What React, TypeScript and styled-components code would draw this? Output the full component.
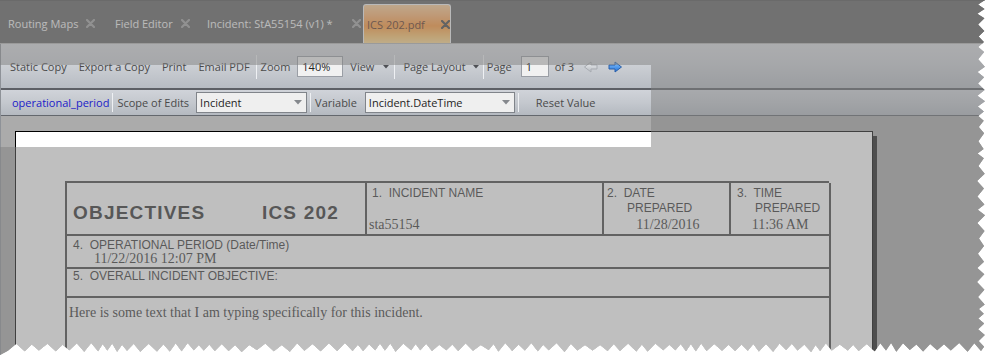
import React from 'react';
import styled, { createGlobalStyle } from 'styled-components';

const Global = createGlobalStyle`
  html, body { margin: 0; padding: 0; background: #ffffff; }
  body { font-family: "Open Sans", "Noto Sans", sans-serif; }
  #root { width: 985px; height: 355px; }
`;

const W = 985;
const H = 355;

function tornClip(): string {
  let seed = 11;
  const rnd = () => {
    seed = (seed * 16807) % 2147483647;
    return (seed - 1) / 2147483646;
  };
  const pts: string[] = ['0px 0px', `${W}px 0px`];
  let y = 0;
  while (y < H - 14) {
    const step = 9 + rnd() * 7;
    pts.push(`${(W - 6 - rnd() * 2).toFixed(1)}px ${(y + step / 2).toFixed(1)}px`);
    y += step;
    pts.push(`${(W - rnd() * 1.5).toFixed(1)}px ${y.toFixed(1)}px`);
  }
  let x = W - 4;
  pts.push(`${x}px ${H - 4}px`);
  while (x > 14) {
    const step = 9 + rnd() * 8;
    pts.push(`${(x - step / 2).toFixed(1)}px ${(H - 10 - rnd() * 2).toFixed(1)}px`);
    x -= step;
    pts.push(`${x.toFixed(1)}px ${(H - 3 - rnd() * 2).toFixed(1)}px`);
  }
  pts.push(`0px ${H}px`);
  return `polygon(${pts.join(', ')})`;
}

const Frame = styled.div<{ $clip: string }>`
  position: relative;
  width: ${W}px;
  height: ${H}px;
  overflow: hidden;
  clip-path: ${(p) => p.$clip};
  display: flex;
  flex-direction: column;
  background: #ababab;
`;

/* ---------- tab bar ---------- */
const TabBar = styled.div`
  height: 42px;
  flex: none;
  background: #626262;
  border-top: 1px solid #545454;
  border-bottom: 1px solid #b4b4b4;
  display: flex;
  align-items: flex-end;
`;

const Tab = styled.div<{ $w: number; $pl: number; $active?: boolean }>`
  box-sizing: border-box;
  width: ${(p) => p.$w}px;
  height: 39px;
  padding-left: ${(p) => p.$pl}px;
  display: flex;
  align-items: center;
  gap: 8px;
  font-size: 11px;
  color: ${(p) => (p.$active ? '#5a3020' : '#f4f4f4')};
  white-space: nowrap;
  ${(p) =>
    p.$active &&
    `
    border: 1px solid #f2f2f2;
    border-bottom: none;
    border-radius: 3px 3px 0 0;
    background: linear-gradient(#ffcf98 0%, #ffb068 30%, #ff9838 55%, #ffc870 85%, #ffd890 100%);
  `}
`;

const TabGap = styled.span<{ $w: number }>`
  flex: none;
  width: ${(p) => p.$w}px;
`;

const CloseX = ({ color }: { color: string }) => (
  <svg width="9" height="9" viewBox="0 0 9 9" style={{ flex: 'none' }}>
    <path d="M1 1 L8 8 M8 1 L1 8" stroke={color} strokeWidth="2.2" strokeLinecap="round" />
  </svg>
);

/* ---------- toolbars ---------- */
const Body = styled.div`
  flex: 1;
  display: flex;
  flex-direction: column;
  border-left: 1px solid #8e9298;
`;

const Toolbar = styled.div`
  height: 46px;
  flex: none;
  box-sizing: border-box;
  background: linear-gradient(#d8dade 0%, #cdd0d5 45%, #b7bcc3 100%);
  border-bottom: 2px solid #5d6066;
  display: flex;
  align-items: center;
  padding: 1px 0 0 3px;
  font-size: 11px;
  color: #4a4a4a;
`;

const Toolbar2 = styled(Toolbar)`
  height: 26px;
  border-bottom: 1px solid #63676d;
  background: linear-gradient(#d0d3d9 0%, #c4c8ce 50%, #b4b9c0 100%);
  padding: 0 0 0 5px;
`;

const ToolButton = styled.div<{ $pl?: number; $pr?: number; $gap?: number }>`
  display: flex;
  align-items: center;
  gap: ${(p) => p.$gap ?? 9}px;
  height: 22px;
  padding: 0 ${(p) => p.$pr ?? 6}px 0 ${(p) => p.$pl ?? 6}px;
  white-space: nowrap;
`;

const Sep = styled.div<{ $h?: number }>`
  width: 1px;
  height: ${(p) => p.$h ?? 24}px;
  background: #eef0f3;
  flex: none;
`;

const Field = styled.div<{ $w: number }>`
  box-sizing: border-box;
  width: ${(p) => p.$w}px;
  height: 21px;
  margin: 0 3px;
  border: 1px solid #9a9ea5;
  background: #f1f1f1;
  color: #222;
  display: flex;
  align-items: center;
  padding-left: 4px;
  font-size: 11px;
  flex: none;
`;

const Select = styled.div<{ $w: number }>`
  box-sizing: border-box;
  width: ${(p) => p.$w}px;
  height: 21px;
  margin: 0 3px;
  border: 1px solid #80848a;
  background: #efefef;
  color: #1e1e1e;
  display: flex;
  align-items: center;
  justify-content: space-between;
  padding: 0 4px 0 3px;
  font-size: 11px;
  flex: none;
`;

const LinkText = styled.span`
  color: #2020c8;
  padding: 0 3px 0 6px;
`;

const Caret = () => (
  <svg width="6" height="4" viewBox="0 0 6 4">
    <path d="M0 0 H6 L3 3.5 Z" fill="#4f5156" />
  </svg>
);

const SelectArrow = () => (
  <svg width="8" height="5" viewBox="0 0 8 5">
    <path d="M0 0 H8 L4 4.5 Z" fill="#85888d" />
  </svg>
);

const NavArrow = ({ dir, on }: { dir: 'left' | 'right'; on: boolean }) => (
  <svg width="15" height="12" viewBox="0 0 15 12" style={{ flex: 'none', transform: dir === 'left' ? 'scaleX(-1)' : undefined }}>
    <defs>
      <linearGradient id={`ag-${dir}`} x1="0" y1="0" x2="0" y2="1">
        <stop offset="0" stopColor={on ? '#8cc8ff' : '#eceef0'} />
        <stop offset="1" stopColor={on ? '#1f6fd8' : '#b8bcc2'} />
      </linearGradient>
    </defs>
    <path
      d="M1 4 H7 V1 L13.5 6 L7 11 V8 H1 Z"
      fill={`url(#ag-${dir})`}
      stroke={on ? '#2a5fa8' : '#a7abb1'}
      strokeWidth="1"
      strokeLinejoin="round"
    />
  </svg>
);

/* ---------- document area ---------- */
const Content = styled.div`
  flex: 1;
  background: #ababab;
  padding: 15px 0 0 14px;
  overflow: hidden;
`;

const Page = styled.div`
  width: 858px;
  height: 400px;
  background: #ffffff;
  border: 1px solid #000;
  box-shadow: 4px 5px 0 #1c1c1c;
  padding: 49px 0 0 49px;
  box-sizing: border-box;
`;

const Form = styled.div`
  display: grid;
  grid-template-columns: 300px 237px 127px 100px;
  grid-template-rows: 53px 33px 29px 120px;
  width: 764px;
  border-top: 2px solid #444;
  border-left: 2px solid #444;
  box-sizing: border-box;
  color: #333;
`;

const Cell = styled.div<{ $span?: number }>`
  grid-column: span ${(p) => p.$span ?? 1};
  border-right: 2px solid #444;
  border-bottom: 2px solid #444;
  box-sizing: border-box;
  display: flex;
  flex-direction: column;
`;

const TitleCell = styled(Cell)`
  flex-direction: row;
  align-items: flex-end;
  justify-content: space-between;
  padding: 0 26px 12px 6px;
  font-family: "Liberation Sans", Arial, sans-serif;
  font-weight: bold;
  font-size: 19px;
  line-height: 19px;
  letter-spacing: 1.2px;
  color: #2e2e2e;
`;

const Label = styled.div<{ $indent?: number }>`
  font-family: "Liberation Sans", Arial, sans-serif;
  font-size: 12px;
  line-height: 15px;
  white-space: pre;
  padding-left: ${(p) => p.$indent ?? 0}px;
`;

const Value = styled.div<{ $indent?: number; $center?: boolean; $mt?: number }>`
  font-family: "Liberation Serif", "Times New Roman", serif;
  font-size: 14px;
  line-height: 16px;
  white-space: pre;
  margin-top: ${(p) => p.$mt ?? 0}px;
  padding-left: ${(p) => p.$indent ?? 0}px;
  text-align: ${(p) => (p.$center ? 'center' : 'left')};
`;

const LabelBlock = styled.div<{ $pl: number; $pt: number }>`
  padding: ${(p) => p.$pt}px 0 0 ${(p) => p.$pl}px;
  display: flex;
  flex-direction: column;
`;

const BottomValue = styled.div`
  margin-top: auto;
  padding: 0 0 1px 2px;
`;

/* ---------- spotlight (dims everything but one rectangle) ---------- */
const Spotlight = styled.div`
  position: absolute;
  left: 0;
  top: 65px;
  width: 651px;
  height: 82px;
  box-shadow: 0 0 0 3000px rgba(128, 128, 128, 0.5);
  pointer-events: none;
`;

export default function App() {
  const clip = React.useMemo(() => tornClip(), []);
  return (
    <>
      <Global />
      <Frame $clip={clip}>
        <TabBar>
          <Tab $w={107} $pl={8}>
            Routing Maps<CloseX color="#a2a2a2" />
          </Tab>
          <Tab $w={93} $pl={8}>
            Field Editor<CloseX color="#a2a2a2" />
          </Tab>
          <Tab $w={163} $pl={7}>
            Incident: StA55154 (v1) *<TabGap $w={3} />
            <CloseX color="#a2a2a2" />
          </Tab>
          <Tab $w={88} $pl={3} $active>
            ICS 202.pdf<TabGap $w={0} />
            <CloseX color="#474747" />
          </Tab>
        </TabBar>
        <Body>
          <Toolbar>
            <ToolButton>Static Copy</ToolButton>
            <ToolButton>Export a Copy</ToolButton>
            <ToolButton>Print</ToolButton>
            <ToolButton>Email PDF</ToolButton>
            <Sep />
            <ToolButton $pl={4} $pr={4}>Zoom</ToolButton>
            <Field $w={46}>140%</Field>
            <ToolButton $pl={4} $pr={5}>
              View <Caret />
            </ToolButton>
            <Sep />
            <ToolButton $pl={8} $pr={4} $gap={7}>
              Page Layout <Caret />
            </ToolButton>
            <Sep />
            <ToolButton $pl={3} $pr={6}>Page</ToolButton>
            <Field $w={28}>1</Field>
            <ToolButton $pl={3} $pr={9}>of 3</ToolButton>
            <NavArrow dir="left" on={false} />
            <TabGap $w={10} />
            <NavArrow dir="right" on />
          </Toolbar>
          <Toolbar2>
            <LinkText>operational_period</LinkText>
            <Sep $h={19} />
            <ToolButton $pl={4} $pr={4}>Scope of Edits</ToolButton>
            <Select $w={111}>
              Incident <SelectArrow />
            </Select>
            <Sep $h={19} />
            <ToolButton $pl={4} $pr={5}>Variable</ToolButton>
            <Select $w={150}>
              Incident.DateTime <SelectArrow />
            </Select>
            <Sep $h={19} />
            <ToolButton $pl={17} $pr={6}>Reset Value</ToolButton>
          </Toolbar2>
          <Content>
            <Page>
              <Form>
                <TitleCell>
                  <span>OBJECTIVES</span>
                  <span>ICS 202</span>
                </TitleCell>
                <Cell>
                  <LabelBlock $pl={5} $pt={3}>
                    <Label>{'1.  INCIDENT NAME'}</Label>
                  </LabelBlock>
                  <BottomValue>
                    <Value>sta55154</Value>
                  </BottomValue>
                </Cell>
                <Cell>
                  <LabelBlock $pl={3} $pt={3}>
                    <Label>{'2.  DATE'}</Label>
                    <Label $indent={20}>PREPARED</Label>
                    <Value $center $mt={1}>11/28/2016</Value>
                  </LabelBlock>
                </Cell>
                <Cell>
                  <LabelBlock $pl={6} $pt={3}>
                    <Label>{'3.  TIME'}</Label>
                    <Label $indent={18}>PREPARED</Label>
                  </LabelBlock>
                  <Value $center $mt={1}>11:36 AM</Value>
                </Cell>
                <Cell $span={4}>
                  <LabelBlock $pl={6} $pt={2}>
                    <Label>{'4.  OPERATIONAL PERIOD (Date/Time)'}</Label>
                    <Value $indent={21} $mt={-2}>11/22/2016 12:07 PM</Value>
                  </LabelBlock>
                </Cell>
                <Cell $span={4}>
                  <LabelBlock $pl={6} $pt={0}>
                    <Label>{'5.  OVERALL INCIDENT OBJECTIVE:'}</Label>
                  </LabelBlock>
                </Cell>
                <Cell $span={4}>
                  <LabelBlock $pl={2} $pt={7}>
                    <Value>Here is some text that I am typing specifically for this incident.</Value>
                  </LabelBlock>
                </Cell>
              </Form>
            </Page>
          </Content>
        </Body>
        <Spotlight />
      </Frame>
    </>
  );
}
